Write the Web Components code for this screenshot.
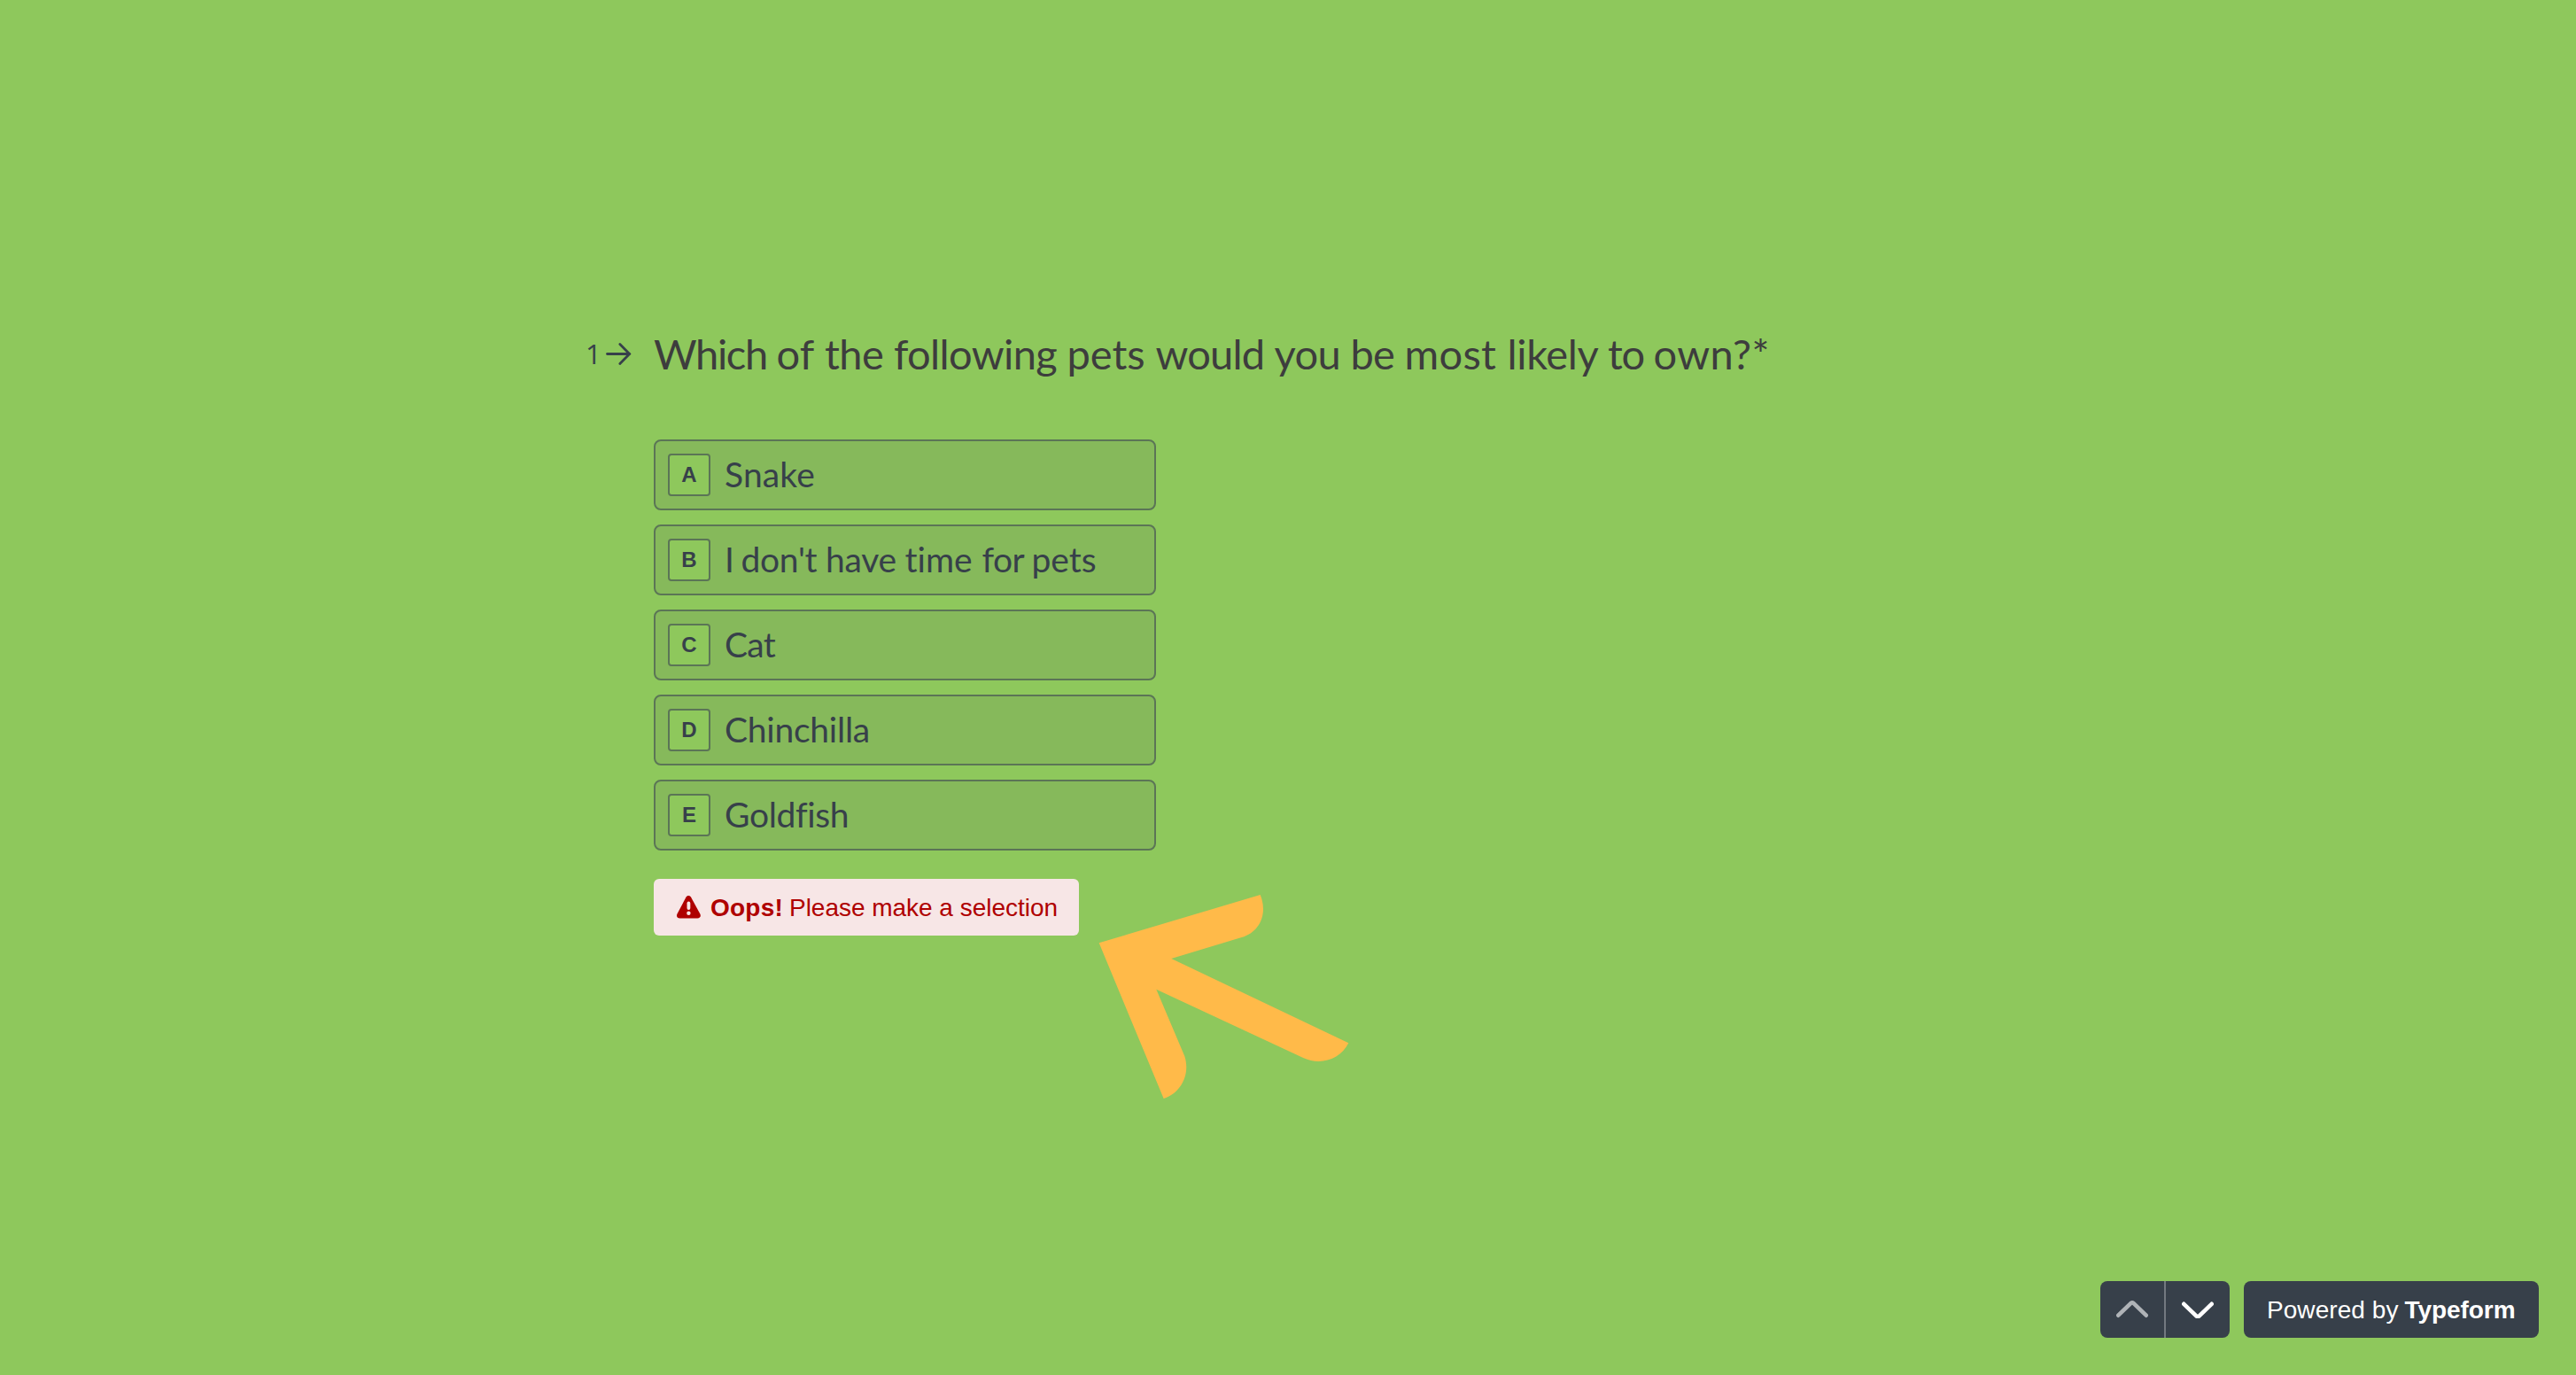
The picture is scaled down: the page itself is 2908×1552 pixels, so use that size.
<!DOCTYPE html>
<html lang="en">
<head>
<meta charset="utf-8">
<title>Typeform</title>
<style>
html,body{margin:0;height:100%}
body{background:#8ec85c;font-family:"Liberation Sans",sans-serif;color:#37404a;overflow:hidden}
</style>
</head>
<body>
<form-page>
  <question-block number="1">
    <fit-text slot="title" widths="138.5 54.5 78 195.5 100 134 86 61 116 113.5 51.5 111 18">Which of the following pets would you be most likely to own? *</fit-text>
    <choice-item key="A"><fit-text widths="102">Snake</fit-text></choice-item>
    <choice-item key="B"><fit-text widths="18.5 95.5 89.500 87 56 73">I don't have time for pets</fit-text></choice-item>
    <choice-item key="C"><fit-text widths="57">Cat</fit-text></choice-item>
    <choice-item key="D"><fit-text widths="164">Chinchilla</fit-text></choice-item>
    <choice-item key="E"><fit-text widths="139.5">Goldfish</fit-text></choice-item>
    <error-message slot="error"><fit-text slot="strong" widths="82">Oops!</fit-text><fit-text widths="303">Please_make_a_selection</fit-text></error-message>
  </question-block>
  <pointer-arrow slot="overlay"></pointer-arrow>
  <nav-buttons slot="footer"></nav-buttons>
  <powered-badge slot="footer"><fit-text widths="148.5">Powered_by</fit-text><fit-text slot="brand" widths="125">Typeform</fit-text></powered-badge>
</form-page>
<script>
function define(name, html, setup) {
  const template = document.createElement('template');
  template.innerHTML = html;
  customElements.define(name, class extends HTMLElement {
    constructor() {
      super();
      this.attachShadow({ mode: 'open' }).append(template.content.cloneNode(true));
    }
    connectedCallback() { if (setup) setup.call(this, this.shadowRoot); }
  });
}

define('form-page', `
<style>
:host{display:flex;flex-direction:column;height:100vh;position:relative;box-sizing:border-box}
main{flex:1;padding:368px 0 0 662px}
footer{display:flex;justify-content:flex-end;gap:16px;padding:0 42px 42px 0}
</style>
<main><slot></slot></main>
<slot name="overlay"></slot>
<footer><slot name="footer"></slot></footer>`);

define('question-block', `
<style>
:host{display:grid;grid-template-columns:76px 567px;font-family:Lato,sans-serif}
.num{display:flex;align-items:center;height:62px;font:31px/62px "Open Sans",sans-serif}
.num span{width:22px;margin-left:-1px}
svg{display:block}
.title{height:64px;line-height:62px;font-size:47px;color:#3d3d3d;white-space:nowrap}
.choices{grid-column:2;display:flex;flex-direction:column;gap:16px;margin-top:64px}
.error{grid-column:2;display:flex;margin-top:32px}
</style>
<div class="num"><span></span><svg width="30" height="28" viewBox="0 0 30 28" fill="none" stroke="#37404a" stroke-width="2.8" stroke-linecap="round"><path d="M2.500 14.500H27.500"/><path d="M16.800 3.500l10.800 11L16.800 25.500"/></svg></div>
<div class="title"><slot name="title"></slot></div>
<div class="choices"><slot></slot></div>
<div class="error"><slot name="error"></slot></div>`, function (root) {
  root.querySelector('span').textContent = this.getAttribute('number');
});

define('choice-item', `
<style>
:host{display:flex;align-items:center;box-sizing:border-box;height:80px;padding-left:14px;gap:16px;border:2px solid #5b7556;border-radius:8px;background:#86b95b;font-size:39px;line-height:48px}
.key{display:flex;justify-content:center;box-sizing:border-box;width:48px;height:48px;border:2px solid #5b7556;border-radius:4px;background:#8ec85c;font:bold 24px/43px "Liberation Sans",sans-serif}
.label{padding-bottom:2px}
</style>
<span class="key"></span><div class="label"><slot></slot></div>`, function (root) {
  root.querySelector('.key').textContent = this.getAttribute('key');
});

define('error-message', `
<style>
:host{display:flex;align-items:center;box-sizing:border-box;width:480px;height:64px;padding:1px 0 0 26px;border-radius:6px;background:#f7e6e6;color:#af0000;font:28px/32px "Liberation Sans",sans-serif}
svg{margin:-2px 10px 0 0}
b{margin-right:7px}
</style>
<svg width="28" height="26" viewBox="0 0 28 26"><path fill="#af0000" d="M10.400 1.800C11.700-.5 14.800-.5 16.100 1.800L26.300 20.600C27.700 23.400 26.200 25.500 23.300 25.500H3.500C.5 25.500-.8 23.400.5 20.600Z"/><path d="M13.400 8.500v5.500" stroke="#f7e6e6" stroke-width="3.800" stroke-linecap="round"/><circle cx="13.400" cy="19.800" r="2.200" fill="#f7e6e6"/></svg>
<b><slot name="strong"></slot></b><slot></slot>`);

define('nav-buttons', `
<style>
:host{display:flex;width:146px;height:64px;border-radius:8px;background:#37404a;overflow:hidden}
span{flex:1;display:flex;align-items:center;justify-content:center}
span+span{border-left:2px solid #737980}
svg{fill:none;stroke-width:4.6;stroke-linecap:round;stroke-linejoin:round}
</style>
<span><svg width="36" height="20" viewBox="0 0 36 20" stroke="#afb3b7"><path d="M2.300 16.700L16.600 2.900Q18 1.900 19.400 2.900L33.700 16.700"/></svg></span>
<span><svg width="36" height="20" viewBox="0 0 36 20" stroke="#fff"><path d="M2.300 3.800L16.600 17.600Q18 18.600 19.400 17.600L33.700 3.800"/></svg></span>`);

define('powered-badge', `
<style>
:host{display:flex;align-items:center;box-sizing:border-box;width:333px;height:64px;padding:1px 0 0 26px;border-radius:8px;background:#37404a;color:#fff;font-size:28px;line-height:32px}
b{margin-left:7px}
</style>
<slot></slot><b><slot name="brand"></slot></b>`);

define('pointer-arrow', `
<style>:host{display:block;position:absolute;left:1200px;top:980px;pointer-events:none}svg{display:block}</style>
<svg width="360" height="280" viewBox="0 0 1080 840"><path fill="#ffba49" d="M122 253L668 90C695 155 665 217 605 234L367 306L967 592C938 650 870 668 815 643L316 410L412 637C432 700 398 762 341 780Z"/></svg>`);

// Sets each word to its advance width (trailing space included) by adjusting
// the tracking; an underscore joins words that share one width.
define('fit-text', `
<style>:host{display:flex;white-space:pre}span{display:block;flex:none}</style>`, function (root) {
  const widths = this.getAttribute('widths').split(' ').map(Number);
  const words = this.textContent.split(' ');
  words.forEach((word, i) => {
    const span = document.createElement('span');
    const gap = i < words.length - 1 && words[i + 1] !== '*' ? ' ' : '';
    span.textContent = word.replaceAll('_', ' ') + gap;
    root.append(span);
  });
  requestAnimationFrame(() => {
    root.querySelectorAll('span').forEach((span, i) => {
      const natural = span.getBoundingClientRect().width;
      span.style.letterSpacing = (widths[i] - natural) / span.textContent.length + 'px';
      span.style.width = widths[i] + 'px';
    });
  });
});
</script>
</body>
</html>
